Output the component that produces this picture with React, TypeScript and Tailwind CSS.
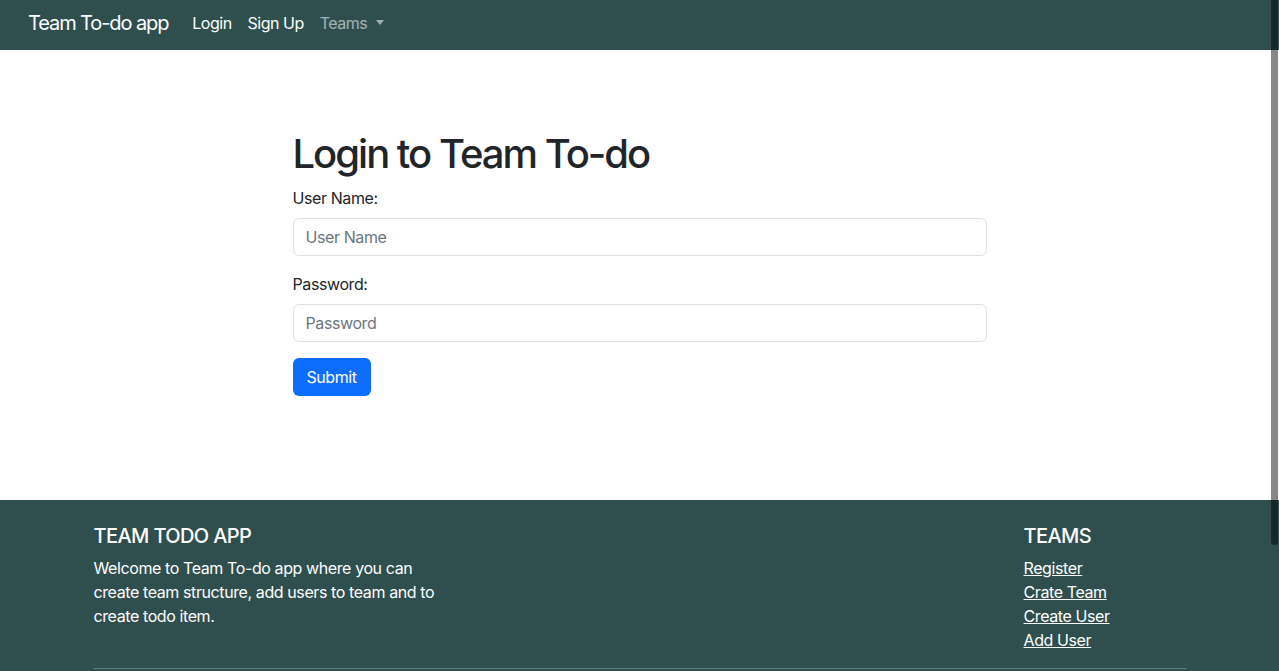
const FONT = { fontFamily: 'Inter, "Liberation Sans", sans-serif' };

const footerLinks = ['Register', 'Crate Team', 'Create User', 'Add User'];

function Navbar() {
  return (
    <nav className="h-[50px] bg-[#2f4f4f] flex items-center pl-[28px] pb-[5px]">
      <span className="text-[20px] tracking-[-1.1px] text-white mr-[16px] leading-[30px]">Team To-do app</span>
      <a className="px-[8px] text-[16px] tracking-[-0.5px] text-white leading-[24px]">Login</a>
      <a className="px-[8px] text-[16px] tracking-[-0.5px] text-white leading-[24px]">Sign Up</a>
      <a className="px-[8px] text-[16px] tracking-[-0.5px] text-white/55 leading-[24px] flex items-center">
        Teams
        {/* bootstrap-style caret */}
        <span className="ml-[9px] inline-block w-0 h-0 border-l-[4px] border-r-[4px] border-t-[5px] border-l-transparent border-r-transparent border-t-white/55" />
      </a>
    </nav>
  );
}

function LoginForm() {
  return (
    <main className="h-[450px] pt-[80px]">
      <div className="w-[694px] mx-auto">
        <h1 className="text-[40px] leading-[48px] tracking-[-2px] font-medium text-[#212529] mb-[8px]">Login to Team To-do</h1>

        <label className="block text-[16px] leading-[24px] tracking-[-0.4px] text-[#212529] mb-[8px]">User Name:</label>
        <input
          placeholder="User Name"
          className="block w-full h-[38px] px-[12px] border border-[#dee2e6] rounded-[6px] text-[16px] tracking-[-0.4px] text-[#212529] placeholder:text-[#6c757d] mb-[16px] outline-none"
        />

        <label className="block text-[16px] leading-[24px] tracking-[-0.4px] text-[#212529] mb-[8px]">Password:</label>
        <input
          type="password"
          placeholder="Password"
          className="block w-full h-[38px] px-[12px] border border-[#dee2e6] rounded-[6px] text-[16px] tracking-[-0.4px] text-[#212529] placeholder:text-[#6c757d] mb-[16px] outline-none"
        />

        <button className="h-[38px] w-[78px] bg-[#0d6efd] text-white text-[16px] tracking-[-0.4px] rounded-[6px]">Submit</button>
      </div>
    </main>
  );
}

function Footer() {
  return (
    <footer className="bg-[#2f4f4f] text-white pt-[24px] pb-[40px] tracking-[-0.4px]">
      <div className="w-[1092px] mx-auto">
        <div className="flex justify-between">
          <div className="w-[350px]">
            <h5 className="text-[20px] leading-[24px] tracking-[-0.6px] font-medium mb-[8px]">TEAM TODO APP</h5>
            <p className="text-[16px] leading-[24px]">
              Welcome to Team To-do app where you can create team structure, add users to team and to create todo item.
            </p>
          </div>
          <div className="w-[162px]">
            <h5 className="text-[20px] leading-[24px] tracking-[-0.6px] font-medium mb-[8px]">TEAMS</h5>
            <ul>
              {footerLinks.map(l => (
                <li key={l} className="text-[16px] leading-[24px]">
                  <a className="underline">{l}</a>
                </li>
              ))}
            </ul>
          </div>
        </div>
        <hr className="mt-[16px] border-t border-white/25" />
      </div>
    </footer>
  );
}

export default function App() {
  return (
    <div style={FONT} className="relative">
      <Navbar />
      <LoginForm />
      <Footer />
      {/* macOS overlay scrollbar thumb */}
      <div className="fixed top-0 right-[1px] w-[7px] h-[545px] rounded-b-full bg-black/[0.47]" />
    </div>
  );
}
